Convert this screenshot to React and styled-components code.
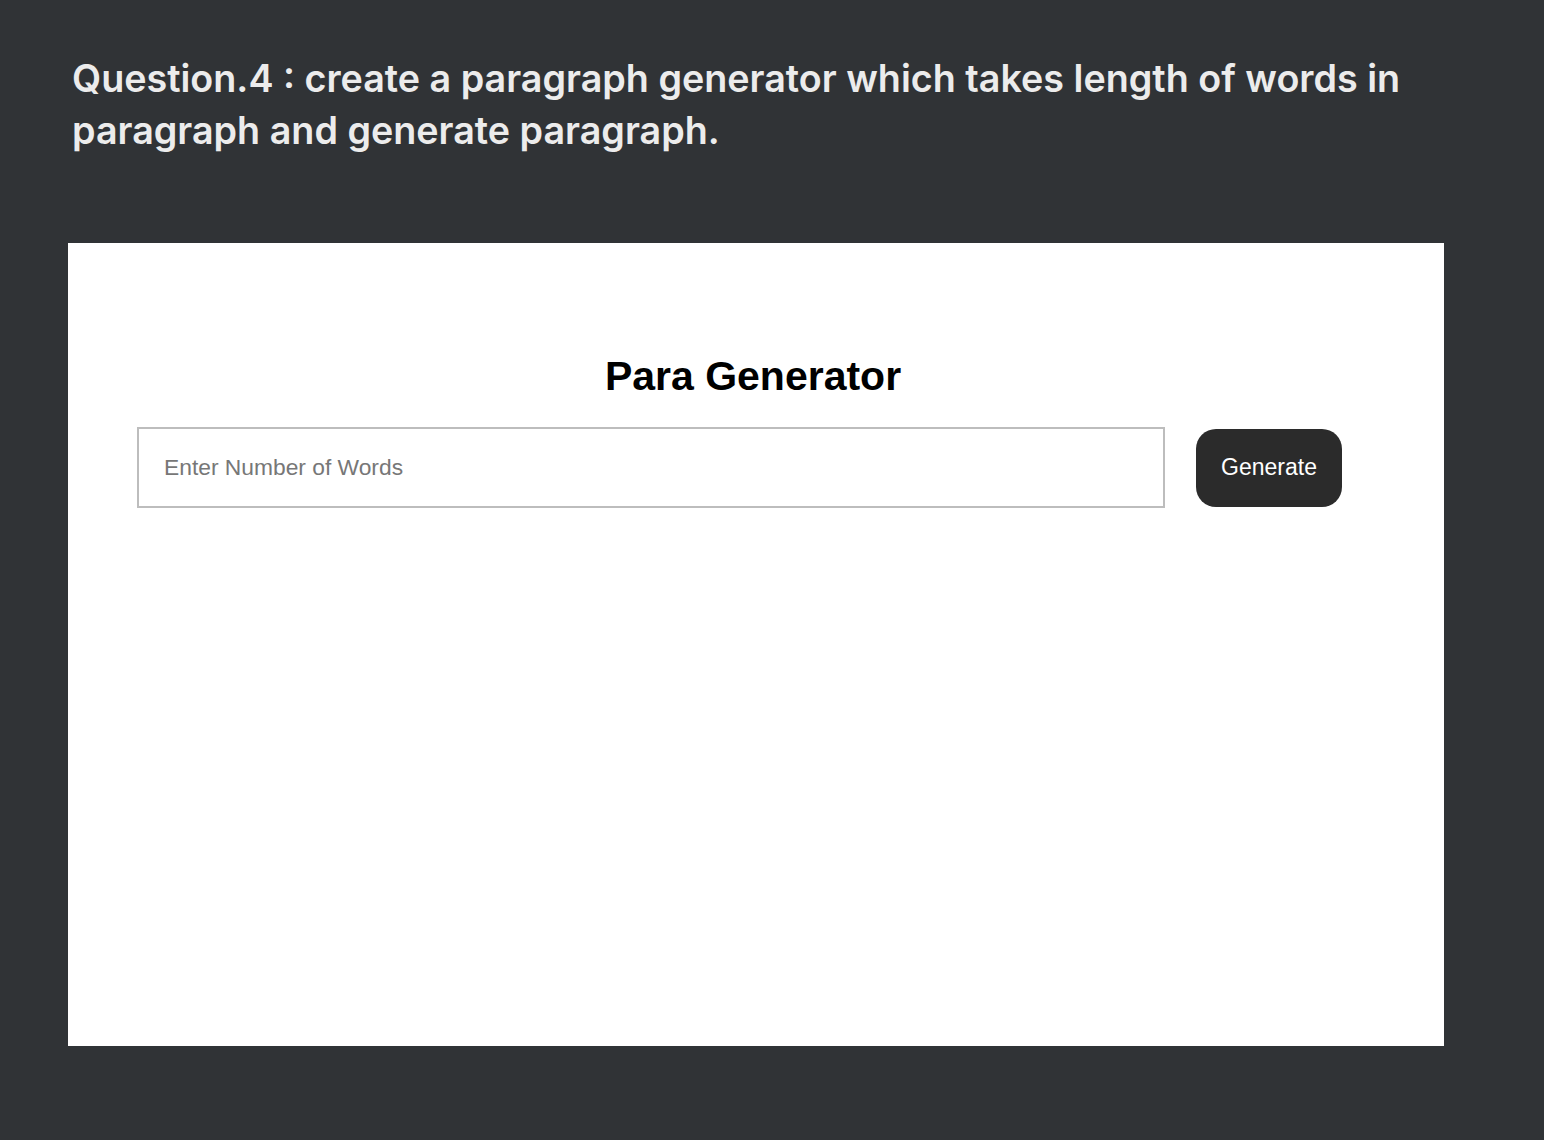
import React, { useState } from 'react'
import styled, { createGlobalStyle } from 'styled-components'

const GlobalStyle = createGlobalStyle`
  html, body {
    margin: 0;
    padding: 0;
    background-color: #303336;
  }
  * {
    box-sizing: border-box;
  }
`;

const Page = styled.div`
  width: 1544px;
  height: 1140px;
  background-color: #303336;
  padding: 52px 68px 0 68px;
`;

const Question = styled.h2`
  margin: 0 0 0 4px;
  font-family: Inter, "Noto Sans", sans-serif;
  font-size: 37.7px;
  font-weight: 600;
  line-height: 52px;
  color: #ececec;
`;

const Panel = styled.div`
  margin-top: 87px;
  width: 1376px;
  height: 803px;
  background-color: #ffffff;
  padding-top: 108px;
  font-family: Arial, "Liberation Sans", sans-serif;
`;

const Title = styled.h1`
  margin: 0 0 0 -6px;
  text-align: center;
  font-size: 41px;
  font-weight: 700;
  line-height: 50px;
  color: #000;
`;

const Row = styled.div`
  display: flex;
  align-items: center;
  gap: 31px;
  margin-top: 26px;
  padding-left: 69px;
`;

const Input = styled.input`
  width: 1028px;
  height: 81px;
  border: 2px solid #bdbdbd;
  padding: 0 25px;
  font-family: Arial, "Liberation Sans", sans-serif;
  font-size: 22.8px;
  color: #333;
  outline: none;

  &::placeholder {
    color: #777;
  }
`;

const Button = styled.button`
  width: 146px;
  height: 78px;
  border: none;
  border-radius: 20px;
  background-color: #2b2b2b;
  color: #fff;
  font-family: Arial, "Liberation Sans", sans-serif;
  font-size: 23px;
  cursor: pointer;
`;

const App = () => {
  const [count, setCount] = useState("")

  return (
    <>
      <GlobalStyle />
      <Page>
        <Question>
          Question.4 : create a paragraph generator which takes length of words in paragraph and generate paragraph.
        </Question>
        <Panel>
          <Title>Para Generator</Title>
          <Row>
            <Input
              type="text"
              value={count}
              onChange={(e) => setCount(e.target.value)}
              placeholder="Enter Number of Words" />
            <Button>Generate</Button>
          </Row>
        </Panel>
      </Page>
    </>
  )
}

export default App
